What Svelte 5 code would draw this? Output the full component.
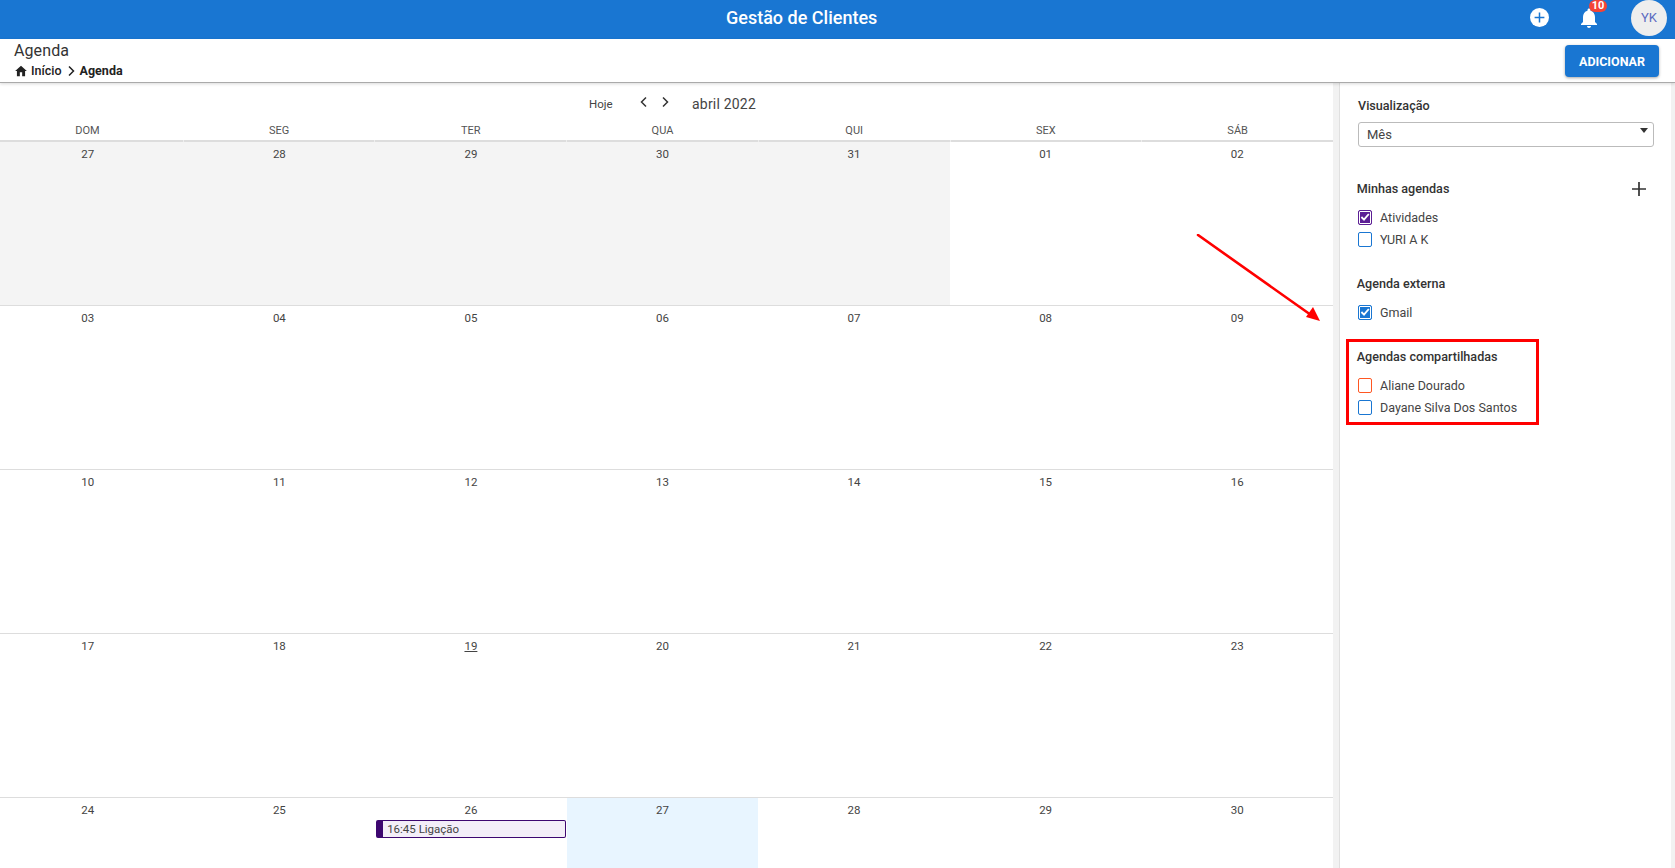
<script>
  const heads = ['DOM','SEG','TER','QUA','QUI','SEX','SÁB'];
  const days = [
    ['27','28','29','30','31','01','02'],
    ['03','04','05','06','07','08','09'],
    ['10','11','12','13','14','15','16'],
    ['17','18','19','20','21','22','23'],
    ['24','25','26','27','28','29','30']
  ];
  const isOut = (r, c) => r === 0 && c < 5;
  const isToday = (r, c) => r === 4 && c === 3;
  const isEvent = (r, c) => r === 4 && c === 2;
  const isMarked = (r, c) => r === 3 && c === 2;
</script>

<div class="page">
  <header class="topbar">
    <span class="brand">Gestão de Clientes</span>
    <div class="actions">
      <svg class="plus-circle" viewBox="0 0 19 19" width="19" height="19">
        <circle cx="9.5" cy="9.5" r="9.5" fill="#fff"/>
        <path d="M9.5 4.6v9.8M4.6 9.5h9.8" stroke="#1976d2" stroke-width="1.5"/>
      </svg>
      <div class="bell">
        <svg viewBox="0 0 24 24" width="24" height="24">
          <path fill="#fff" d="M12 22c1.1 0 2-.9 2-2h-4c0 1.1.9 2 2 2zm6-6v-5c0-3.07-1.63-5.64-4.5-6.32V4c0-.83-.67-1.5-1.5-1.5s-1.5.67-1.5 1.5v.68C7.64 5.36 6 7.92 6 11v5l-2 2v1h16v-1l-2-2z"/>
        </svg>
        <span class="badge">10</span>
      </div>
      <div class="avatar">YK</div>
    </div>
  </header>

  <section class="subbar">
    <div class="crumbs">
      <h1>Agenda</h1>
      <nav>
        <svg viewBox="0 0 24 24" width="14" height="14"><path fill="#222" d="M10 21v-7h4v7h5v-9h3L12 3 2 12h3v9z"/></svg>
        <span class="start">Início</span>
        <svg class="sep" viewBox="0 0 10 12" width="10" height="12"><path d="M3 1.5 7.5 6 3 10.5" fill="none" stroke="#222" stroke-width="1.5"/></svg>
        <b>Agenda</b>
      </nav>
    </div>
    <button class="add">ADICIONAR</button>
  </section>

  <main class="body">
    <div class="calendar">
      <div class="toolbar">
        <span class="today-btn">Hoje</span>
        <svg class="chev" viewBox="0 0 10 12" width="10" height="12"><path d="M7 1.5 2.5 6 7 10.5" fill="none" stroke="#333" stroke-width="1.5"/></svg>
        <svg class="chev next" viewBox="0 0 10 12" width="10" height="12"><path d="M3 1.5 7.5 6 3 10.5" fill="none" stroke="#333" stroke-width="1.5"/></svg>
        <span class="month">abril 2022</span>
      </div>
      <div class="grid">
        <div class="heads">
          {#each heads as h}<div class="head">{h}</div>{/each}
        </div>
        {#each days as row, r}
          <div class="week">
            {#each row as d, c}
              <div class="cell" class:out={isOut(r, c)} class:today={isToday(r, c)}>
                <span class="num" class:marked={isMarked(r, c)}>{d}</span>
                {#if isEvent(r, c)}
                  <div class="event">16:45 Ligação</div>
                {/if}
              </div>
            {/each}
          </div>
        {/each}
      </div>
    </div>

    <aside class="side">
      <div class="panel">
        <h2 class="view-title">Visualização</h2>
        <div class="select">Mês<i class="caret"></i></div>

        <div class="title-row">
          <h2>Minhas agendas</h2>
          <svg viewBox="0 0 14 14" width="14" height="14"><path d="M7 0v14M0 7h14" stroke="#333" stroke-width="1.7"/></svg>
        </div>
        <div class="check"><span class="box purple on"><svg viewBox="0 0 14 14"><path d="M3.4 7 6 9.6l4.8-5.6" fill="none" stroke="#fff" stroke-width="1.8"/></svg></span>Atividades</div>
        <div class="check"><span class="box blue"></span>YURI A K</div>

        <h2 class="ext">Agenda externa</h2>
        <div class="check"><span class="box blue on"><svg viewBox="0 0 14 14"><path d="M3.4 7 6 9.6l4.8-5.6" fill="none" stroke="#fff" stroke-width="1.8"/></svg></span>Gmail</div>

        <h2 class="shared">Agendas compartilhadas</h2>
        <div class="check"><span class="box orange"></span>Aliane Dourado</div>
        <div class="check"><span class="box blue"></span>Dayane Silva Dos Santos</div>
      </div>
    </aside>
  </main>

  <svg class="arrow" viewBox="0 0 140 100" width="140" height="100">
    <path d="M2 1 115 81" stroke="#f00" stroke-width="2.6" stroke-linecap="round"/>
    <path d="M124 87 110 83 117 73z" fill="#f00"/>
  </svg>
  <div class="redbox"></div>
</div>

<style>
  :global(body) {
    margin: 0;
    background: #fff;
    overflow: hidden;
    font-family: Roboto, "Liberation Sans", sans-serif;
    color: #333;
  }
  .page { position: relative; width: 1675px; height: 868px; overflow: hidden; display: flex; flex-direction: column; }

  .topbar { height: 39px; background: #1976d2; display: flex; align-items: center; flex: none; padding-left: 726px; }
  .brand { color: #fff; font-size: 18px; font-weight: 500; line-height: 35px; margin-top: -4px; }
  .actions { margin-left: auto; display: flex; align-items: center; padding-right: 8px; height: 39px; }
  .plus-circle { margin-right: 28.5px; margin-top: -5px; }
  .bell { position: relative; width: 24px; height: 24px; margin-right: 30px; margin-top: -3px; }
  .bell svg { display: block; }
  .badge { position: absolute; left: 12px; top: -6px; width: 18px; height: 12px; border-radius: 6px; background: #f44336; color: #fff; font-size: 11px; font-weight: 700; line-height: 12px; text-align: center; }
  .avatar { width: 36px; height: 36px; border-radius: 50%; background: #eee; color: #5c6bc0; font-size: 13px; line-height: 36px; text-align: center; margin-top: -3px; }

  .subbar { height: 44px; flex: none; display: flex; justify-content: space-between; align-items: flex-start; padding: 0 16px 0 14px; border-bottom: 1px solid #aaa; box-shadow: 0 1px 3px rgba(0,0,0,.15); position: relative; z-index: 1; background: #fff; box-sizing: border-box; }
  .crumbs h1 { margin: 2px 0 0; font-size: 16px; font-weight: 400; line-height: 20px; color: #333; letter-spacing: .1px; }
  .crumbs nav { display: flex; align-items: center; font-size: 12.5px; font-weight: 500; color: #222; line-height: 18px; margin-top: 1px; }
  .start { margin-left: 3px; }
  .sep { margin: 0 4px; }
  .crumbs b { font-weight: 700; }
  .add { margin-top: 6px; width: 94px; height: 32px; border: 0; border-radius: 4px; background: #1976d2; color: #fff; font: 700 12.5px Roboto, sans-serif; padding: 0; box-shadow: 0 1px 3px rgba(0,0,0,.35); }

  .body { flex: 1; display: flex; min-height: 0; }
  .calendar { width: 1333px; flex: none; overflow: hidden; }
  .toolbar { height: 40px; display: flex; align-items: center; padding: 2px 0 0 589px; box-sizing: border-box; }
  .today-btn { font-size: 11.5px; color: #444; width: 50px; }
  .chev { margin-top: -4px; }
  .chev.next { margin-left: 11px; }
  .month { font-size: 14px; margin-left: 22px; color: #444; letter-spacing: .2px; }
  .grid { width: 1341px; margin-left: -8px; }
  .heads { display: grid; grid-template-columns: repeat(7, 1fr); column-gap: 1px; height: 19px; background: linear-gradient(#eee, #eee) bottom / 100% 2px no-repeat; }
  .head { font-size: 11px; text-align: center; color: #555; line-height: 16px; border-bottom: 2px solid #ddd; box-sizing: content-box; height: 17px; }
  .week { display: grid; grid-template-columns: repeat(7, 1fr); height: 164px; border-bottom: 1px solid #ddd; box-sizing: border-box; }
  .cell { text-align: center; padding-top: 5px; box-sizing: border-box; }
  .cell.out { background: #f4f4f4; }
  .cell.today { background: #e8f5ff; }
  .num { font-size: 11.5px; line-height: 14px; color: #444; display: block; }
  .num.marked { text-decoration: underline; }
  .event { margin: 3px 1px 0; height: 18px; box-sizing: border-box; border: 1px solid #3d0770; border-left-width: 7px; border-radius: 2px; background: #f3eef8; color: #444; font-size: 11.5px; line-height: 16px; text-align: left; padding-left: 4px; }

  .side { flex: 1; background: #f2f2f2; display: flex; padding: 0 4px 0 6px; }
  .panel { flex: 1; background: #fff; padding: 15px 15px 0 16px; border-left: 1px solid #e0e0e0; box-sizing: border-box; }
  h2 { font-size: 12.6px; font-weight: 500; color: #333; margin: 0 0 0 .7px; line-height: 16px; }
  .view-title { margin-left: 2px; }
  .select { position: relative; margin: 8px 0 0 2px; height: 25px; width: 296px; box-sizing: border-box; border: 1px solid #bbb; border-radius: 3px; font-size: 13px; line-height: 23px; padding-left: 8px; color: #444; }
  .caret { position: absolute; right: 5px; top: 5px; border: 4px solid transparent; border-top: 5px solid #333; border-bottom: 0; }
  .title-row { display: flex; justify-content: space-between; align-items: center; margin-top: 34px; width: 290px; height: 16px; margin-bottom: 9px; }
  .check { display: flex; align-items: center; height: 22px; font-size: 12.5px; color: #444; padding-left: 2px; }
  .box { width: 14px; height: 15px; box-sizing: border-box; border: 1.5px solid; border-radius: 2px; margin-right: 8px; flex: none; display: block; }
  .box svg { display: block; width: 14px; height: 14px; margin: -1px -1.5px; }
  .box.blue { border-color: #1976d2; }
  .box.blue.on { background: #1976d2; box-shadow: inset 0 0 0 1px #fff; }
  .box.purple { border-color: #5c1f95; }
  .box.purple.on { background: #5c1f95; box-shadow: inset 0 0 0 1px #fff; }
  .box.orange { border-color: #ff5722; }
  .ext { margin-top: 26px; margin-bottom: 9px; }
  .shared { margin-top: 26px; margin-bottom: 9px; }

  .arrow { position: absolute; left: 1196px; top: 234px; }
  .redbox { position: absolute; left: 1346px; top: 339px; width: 193px; height: 86px; box-sizing: border-box; border: 3px solid #f00; }
</style>
